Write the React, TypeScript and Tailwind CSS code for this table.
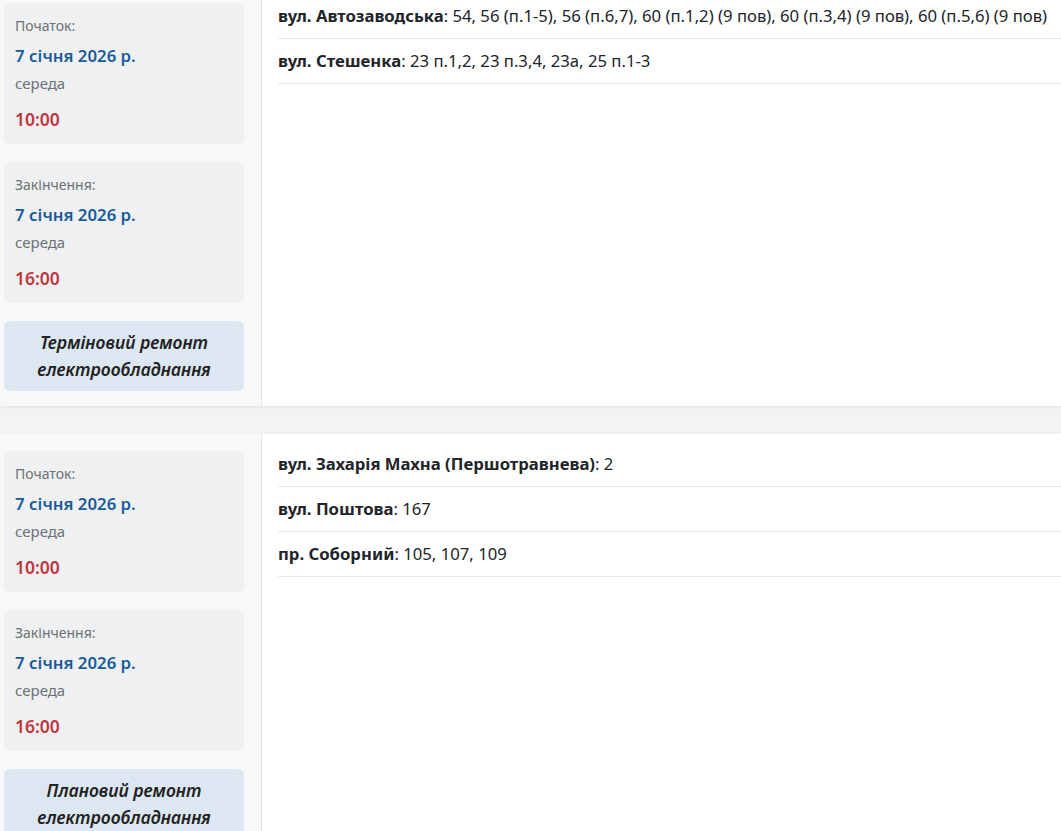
const outages = [
  {
    start: { date: "7 січня 2026 р.", day: "середа", time: "10:00" },
    end: { date: "7 січня 2026 р.", day: "середа", time: "16:00" },
    type: "Терміновий ремонт електрообладнання",
    streets: [
      {
        name: "вул. Автозаводська",
        houses: "54, 56 (п.1-5), 56 (п.6,7), 60 (п.1,2) (9 пов), 60 (п.3,4) (9 пов), 60 (п.5,6) (9 пов)",
      },
      { name: "вул. Стешенка", houses: "23 п.1,2, 23 п.3,4, 23а, 25 п.1-3" },
    ],
  },
  {
    start: { date: "7 січня 2026 р.", day: "середа", time: "10:00" },
    end: { date: "7 січня 2026 р.", day: "середа", time: "16:00" },
    type: "Плановий ремонт електрообладнання",
    streets: [
      { name: "вул. Захарія Махна (Першотравнева)", houses: "2" },
      { name: "вул. Поштова", houses: "167" },
      { name: "пр. Соборний", houses: "105, 107, 109" },
    ],
  },
];

type Stamp = { date: string; day: string; time: string };

function TimeBox({ label, stamp }: { label: string; stamp: Stamp }) {
  return (
    <div className="rounded-md bg-[#eff0f2] px-[11px] pt-[13px] pb-[13px]">
      <div className="text-[14px] leading-[20px] text-[#6b7075]">{label}</div>
      <div className="mt-[8px] text-[16.8px] leading-[24px] font-semibold text-[#1a5c99]">{stamp.date}</div>
      <div className="mt-[5px] text-[15px] leading-[20px] text-[#6b7075]">{stamp.day}</div>
      <div className="mt-[14px] text-[17.5px] leading-[24px] font-semibold text-[#c0363f]">{stamp.time}</div>
    </div>
  );
}

export default function App() {
  return (
    <main
      className="min-h-screen bg-[#f3f3f4] text-[#212529]"
      style={{ fontFamily: '"Noto Sans", "Open Sans", sans-serif' }}
    >
      <div className="mt-[-14px] flex flex-col gap-[28px]">
        {outages.map((o, i) => (
          <section key={i} className="flex bg-white shadow-[0_1px_3px_rgba(0,0,0,0.08)]">
            <aside className="flex w-[262px] shrink-0 flex-col gap-[18px] border-r border-[#e3e5e8] bg-[#f7f8fa] pt-[17px] pb-[15px] pl-[4px] pr-[17px]">
              <TimeBox label="Початок:" stamp={o.start} />
              <TimeBox label="Закінчення:" stamp={o.end} />
              <div className="rounded-md bg-[#dde7f2] px-3 pt-[8px] pb-[8px] text-center text-[17.5px] leading-[27px] font-semibold italic text-[#222]">
                {o.type}
              </div>
            </aside>
            <div className="flex-1 pl-[16px] pt-[8px]">
              {o.streets.map((s) => (
                <div
                  key={s.name}
                  className="whitespace-nowrap border-b border-[#e8e9eb] py-[10px] text-[16.7px] leading-[24px]"
                >
                  <span className="font-bold">{s.name}</span>: {s.houses}
                </div>
              ))}
            </div>
          </section>
        ))}
      </div>
    </main>
  );
}
